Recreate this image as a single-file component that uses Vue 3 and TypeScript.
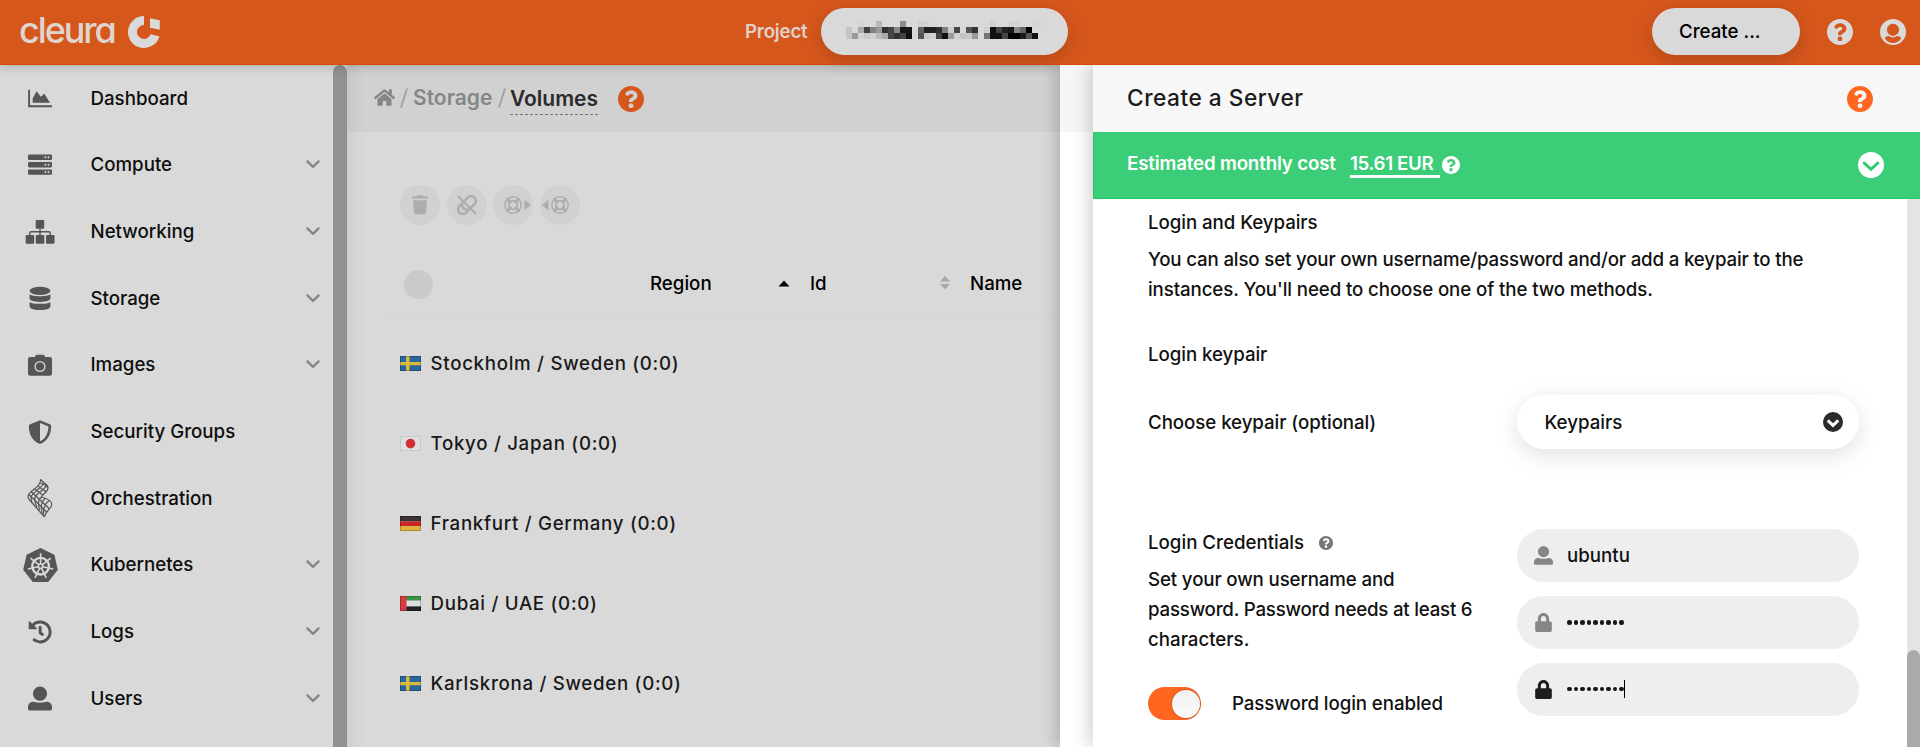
<script setup lang="ts">
interface MenuItem {
  label: string
  icon: string
  expandable: boolean
}

interface Region {
  name: string
  flag: string
}

const menu: MenuItem[] = [
  { label: 'Dashboard', icon: 'chart', expandable: false },
  { label: 'Compute', icon: 'server', expandable: true },
  { label: 'Networking', icon: 'sitemap', expandable: true },
  { label: 'Storage', icon: 'database', expandable: true },
  { label: 'Images', icon: 'camera', expandable: true },
  { label: 'Security Groups', icon: 'shield', expandable: false },
  { label: 'Orchestration', icon: 'mesh', expandable: false },
  { label: 'Kubernetes', icon: 'helm', expandable: true },
  { label: 'Logs', icon: 'history', expandable: true },
  { label: 'Users', icon: 'user', expandable: true },
]

const regions: Region[] = [
  { name: 'Stockholm / Sweden (0:0)', flag: 'se' },
  { name: 'Tokyo / Japan (0:0)', flag: 'jp' },
  { name: 'Frankfurt / Germany (0:0)', flag: 'de' },
  { name: 'Dubai / UAE (0:0)', flag: 'ae' },
  { name: 'Karlskrona / Sweden (0:0)', flag: 'se' },
]

const spokes: number[] = Array.from({ length: 7 }, (_, i) => (i * 360) / 7)

// Grey levels of the redacted project name, one row of 6px cells each.
const d = 217
const redacted: number[][] = [
  [d, d, 212, d, d, 184, d, d, d, 140, d, d, 208, 212, d, d, d, d, d, d, d, d, d, d, 208, d, d, 210, 212, d, d, 210, 214],
  [196, d, 170, 64, 128, 153, 50, 68, 136, 24, 24, d, 96, 32, 32, 48, 128, 205, 68, d, 85, 51, d, 208, 16, 68, 32, 24, 136, 100, 0, d, d],
  [198, 153, 210, 200, 208, 187, 170, 68, 51, 68, 17, d, 85, 200, 208, 68, 17, 153, 208, 196, 200, 153, d, 119, 17, 17, 68, 0, 0, 26, 85, 17, d],
]

const helpPath =
  'M504 256c0 136.997-111.043 248-248 248S8 392.997 8 256C8 119.083 119.043 8 256 8s248 111.083 248 248zM262.655 90c-54.497 0-89.255 22.957-116.549 63.758-3.536 5.286-2.353 12.415 2.715 16.258l34.699 26.31c5.205 3.947 12.621 3.008 16.665-2.122 17.864-22.658 30.113-35.797 57.303-35.797 20.429 0 45.698 13.148 45.698 32.958 0 14.976-12.363 22.667-32.534 33.976C247.128 238.528 216 254.941 216 296v4c0 6.627 5.373 12 12 12h56c6.627 0 12-5.373 12-12v-1.333c0-28.462 83.186-29.647 83.186-106.667 0-58.002-60.165-102-116.531-102zM256 338c-25.365 0-46 20.635-46 46 0 25.364 20.635 46 46 46s46-20.636 46-46c0-25.365-20.635-46-46-46z'
const lockPath =
  'M400 224h-24v-72C376 68.2 307.8 0 224 0S72 68.2 72 152v72H48c-26.5 0-48 21.5-48 48v192c0 26.5 21.5 48 48 48h352c26.5 0 48-21.5 48-48V272c0-26.5-21.5-48-48-48zm-104 0H152v-72c0-39.7 32.3-72 72-72s72 32.3 72 72v72z'
const homePath =
  'M280.37 148.26L96 300.11V464a16 16 0 0 0 16 16l112.06-.29a16 16 0 0 0 15.92-16V368a16 16 0 0 1 16-16h64a16 16 0 0 1 16 16v95.64a16 16 0 0 0 16 16.05L464 480a16 16 0 0 0 16-16V300L295.67 148.26a12.19 12.19 0 0 0-15.3 0zM571.6 251.47L488 182.56V44.05a12 12 0 0 0-12-12h-56a12 12 0 0 0-12 12v72.61L318.47 43a48 48 0 0 0-61 0L4.34 251.47a12 12 0 0 0-1.6 16.9l25.5 31A12 12 0 0 0 45.15 301l235.22-193.74a12.19 12.19 0 0 1 15.3 0L530.9 301a12 12 0 0 0 16.9-1.6l25.5-31a12 12 0 0 0-1.7-16.93z'
const historyPath =
  'M504 255.531c.253 136.64-111.18 248.372-247.82 248.468-59.015.042-113.223-20.53-155.822-54.911-11.077-8.94-11.905-25.541-1.839-35.607l11.267-11.267c8.609-8.609 22.353-9.551 31.891-1.984C173.062 425.135 212.781 440 256 440c101.705 0 184-82.311 184-184 0-101.705-82.311-184-184-184-48.814 0-93.149 18.969-126.068 49.932l50.754 50.754c10.08 10.08 2.941 27.314-11.313 27.314H24c-8.837 0-16-7.163-16-16V38.627c0-14.254 17.234-21.393 27.314-11.314l49.372 49.372C129.209 34.136 189.552 8 256 8c136.81 0 247.747 110.78 248 247.531zm-180.912 78.784l9.823-12.63c8.138-10.463 6.253-25.542-4.21-33.679L288 256.349V152c0-13.255-10.745-24-24-24h-16c-13.255 0-24 10.745-24 24v135.651l65.409 50.874c10.463 8.137 25.541 6.253 33.679-4.21z'
const userPath =
  'M12 0a7.1 7.1 0 1 1 0 14.2A7.1 7.1 0 0 1 12 0zM5.2 15.2c1.7 0 3.4 1 6.8 1s5.100-1 6.800-1c3.100 0 5.200 2.300 5.200 5.300v1.700c0 .9-.7 1.600-1.600 1.600H1.600C.7 23.800 0 23.100 0 22.200v-1.700c0-3 2.100-5.300 5.200-5.300z'
</script>

<template>
  <div class="screen">
    <header class="topbar">
      <div class="brand">
        <span class="wordmark">cleura</span>
        <svg class="mark" viewBox="0 0 32 32">
          <path d="M16 0A16 16 0 1 0 31.400 20.400L22.600 18.200A7 7 0 1 1 16 9z" />
          <path d="M22 2.300l9.800 2v9.400l-9.800-2z" />
        </svg>
      </div>
      <span class="project-label">Project</span>
      <div class="pill project-pill">
        <svg class="mosaic" width="198" height="18" viewBox="0 0 198 18" shape-rendering="crispEdges">
          <template v-for="(row, r) in redacted" :key="r">
            <rect
              v-for="(v, c) in row"
              :key="c"
              :x="c * 6"
              :y="r * 6"
              width="6"
              height="6"
              :fill="`rgb(${v},${v},${v})`"
            />
          </template>
        </svg>
      </div>
      <div class="pill create-pill">Create ...</div>
      <svg class="top-icon help" viewBox="8 8 496 496"><path :d="helpPath" /></svg>
      <svg class="top-icon" viewBox="0 0 26 26">
        <path
          fill-rule="evenodd"
          d="M13 0a13 13 0 1 1 0 26 13 13 0 0 1 0-26zm0 4.700a6.100 6.100 0 1 0 0 12.200 6.100 6.100 0 0 0 0-12.200zM4.700 19.200C6.500 22.200 9.500 24 13 24s6.500-1.800 8.300-4.800c-1-1.500-2.600-2.200-4.300-2.100-1.600 1-2.600 1.400-4 1.400s-2.400-.4-4-1.400c-1.700-.1-3.300.6-4.300 2.100z"
        />
      </svg>
    </header>

    <div class="body">
      <nav class="sidebar">
        <div v-for="item in menu" :key="item.label" class="menu-item">
          <svg class="menu-icon" viewBox="0 0 36 36">
            <g v-if="item.icon === 'chart'">
              <path d="M7.100 9.700v16.500H30" fill="none" stroke="currentColor" stroke-width="1.900" />
              <path d="M10.700 22.700v-4.500l4-7 4 5.500 3.600-3 5.700 9z" />
            </g>
            <g v-else-if="item.icon === 'server'">
              <rect x="6" y="7.600" width="24" height="5.400" rx="1.300" />
              <rect x="6" y="15" width="24" height="5.400" rx="1.300" />
              <rect x="6" y="22.400" width="24" height="5.400" rx="1.300" />
              <g class="cut">
                <template v-for="y in [10.300, 17.700, 25.100]" :key="y">
                  <circle cx="23.400" :cy="y" r="1" />
                  <circle cx="26.500" :cy="y" r="1" />
                </template>
              </g>
            </g>
            <g v-else-if="item.icon === 'sitemap'">
              <rect x="13.700" y="6" width="8.500" height="8.700" rx="1" />
              <rect x="3.700" y="21" width="8.500" height="8.800" rx="1" />
              <rect x="13.800" y="21" width="8.500" height="8.800" rx="1" />
              <rect x="24" y="21" width="8.500" height="8.800" rx="1" />
              <path d="M18 14v8M7.800 22v-3q0-1.300 1.300-1.300h17.800q1.300 0 1.300 1.300v3" fill="none" stroke="currentColor" stroke-width="1.400" />
            </g>
            <g v-else-if="item.icon === 'database'">
              <ellipse cx="18" cy="10.900" rx="10.400" ry="4.200" />
              <path d="M7.600 14.300c2.600 2.600 18.200 2.600 20.800 0v4.300c0 4.400-20.800 4.400-20.800 0z" />
              <path d="M7.600 21.900c2.600 2.600 18.200 2.600 20.800 0v4.300c0 5.200-20.800 5.200-20.800 0z" />
            </g>
            <g v-else-if="item.icon === 'camera'">
              <path d="M8.200 10h4.500l1-1.600q.3-.6 1-.6h6.600q.7 0 1 .6l1 1.600h4.500Q30 10 30 12.200v14.300q0 2.200-2.200 2.200H8.200Q6 28.700 6 26.500V12.200Q6 10 8.200 10z" />
              <circle class="cut-line" cx="18" cy="19.500" r="4.900" />
            </g>
            <g v-else-if="item.icon === 'shield'">
              <path
                fill-rule="evenodd"
                d="M18 6.300l9.800 3.900q1.500.6 1.400 2.200C29 21.600 24.600 27.500 18 30 11.400 27.500 7 21.600 6.800 12.400q0-1.600 1.400-2.200zM18 9v18.200c4.900-2.300 8.100-6.900 8.500-14.800z"
              />
            </g>
            <g v-else-if="item.icon === 'mesh'" fill="none" stroke="currentColor" stroke-width="1.200">
              <path d="M18.600-.7C19 4 16 6 13 8.500S5 13.500 6.200 17.500q.6 2 2.800 4.200L22.500 37M18.600-.7C21 3 26 3.500 26 8c0 4-5 5.500-6.500 9 3.500 1 10.500 3 10.300 7.500C29.600 28.500 23 31.500 22.500 37" />
              <path d="M18.300 3.200c3 .8 6 2.300 7.600 4.800M16 6.200l8.200 5.600M12.700 8.900l8 6M9.300 11.700L27.700 29M7 14.500l18 18" />
              <path d="M21 2.200c1.500 4.800-9 8.300-11.500 13.800-1 2.500-.5 4.500 1 7.500M24 4.500c1 4.500-9 7.500-11 13-.8 3 0 6 2 10M19.500 17c-3.500 2.500-3.700 6-2 13M23.500 18.300c-4.300 3-5 7-3.300 15.700M27.300 20.500c-4.800 3.500-6.300 8-5.600 14" />
            </g>
            <g v-else-if="item.icon === 'helm'">
              <path d="M18.500 1l13.900 6.700 3.400 15L26.200 35H10.800L1.200 22.700l3.400-15z" />
              <g class="cut-line">
                <circle cx="18.600" cy="19.200" r="8.300" stroke-width="2.300" />
                <path
                  v-for="a in spokes"
                  :key="a"
                  d="M18.600 16.800V6.200"
                  stroke-width="1.600"
                  :transform="`rotate(${a} 18.600 19.200)`"
                />
                <circle cx="18.600" cy="19.200" r="2.200" stroke-width="1.600" />
              </g>
            </g>
            <svg v-else-if="item.icon === 'history'" x="6.700" y="6.500" width="22.900" height="22.900" viewBox="8 8 496 496">
              <path :d="historyPath" />
            </svg>
            <path v-else transform="translate(6 6.600)" :d="userPath" />
          </svg>
          <span class="menu-label">{{ item.label }}</span>
          <svg v-if="item.expandable" class="chevron" viewBox="0 0 14 9">
            <path d="M1.400 1.400L7 6.900l5.600-5.500" />
          </svg>
        </div>
      </nav>
      <div class="side-scroll"></div>

      <main class="main">
        <div class="crumbs">
          <svg class="home" viewBox="0 32 576 448"><path :d="homePath" /></svg>
          <svg class="slash" viewBox="0 0 8 20"><path d="M7 .5L1 19.500" /></svg>
          <span class="crumb">Storage</span>
          <svg class="slash second" viewBox="0 0 8 20"><path d="M7 .5L1 19.500" /></svg>
          <span class="crumb current">Volumes</span>
          <svg class="crumb-help" viewBox="8 8 496 496"><path :d="helpPath" /></svg>
        </div>

        <div class="toolbar">
          <span class="tool">
            <svg viewBox="0 0 40 40">
              <path d="M12.200 11.300h4.300l1.200-1.300h4.600l1.200 1.300h4.300v2.300H12.200zM13.300 15.200h13.400l-.6 12q-.1 2-2 2h-8.200q-1.900 0-2-2z" />
            </svg>
          </span>
          <span class="tool">
            <svg viewBox="0 0 40 40">
              <g class="line">
                <path d="M11.500 11.700l17 16.800" stroke-width="2.200" />
                <path d="M18.300 15.200l2.600-2.700a4.700 4.700 0 0 1 6.600 6.700l-2.600 2.500a4.500 4.500 0 0 1-3 1.300M15.400 18.200l-2.900 2.800a4.700 4.700 0 0 0 6.600 6.700l2.400-2.400M15.200 20.800a4.500 4.500 0 0 0 4 3.600" stroke-width="2.500" />
              </g>
            </svg>
          </span>
          <span v-for="side in ['right', 'left']" :key="side" class="tool">
            <svg viewBox="0 0 40 40">
              <g class="line">
                <circle cx="20" cy="20" r="8.200" stroke-width="1.500" />
                <circle cx="20" cy="20" r="4.300" stroke-width="1.700" />
                <path d="M14.300 14.300l3 3M25.700 14.300l-3 3M14.300 25.700l3-3M25.700 25.700l-3-3" stroke-width="2.700" />
              </g>
              <path :d="side === 'right' ? 'M31.500 14.500l6.300 5.500-6.300 5.500z' : 'M8.500 14.500L2.200 20l6.300 5.500z'" />
            </svg>
          </span>
        </div>

        <div class="table-head">
          <span class="check"></span>
          <span class="col region">Region</span>
          <svg class="sort-up" viewBox="0 0 12 7"><path d="M.5 6.500L6 .5l5.500 6z" /></svg>
          <span class="col id">Id</span>
          <svg class="sort" viewBox="0 0 10 14"><path d="M0 5.600L5 0l5 5.600zM0 8l5 5.600L10 8z" /></svg>
          <span class="col">Name</span>
        </div>

        <div v-for="region in regions" :key="region.name" class="region-row">
          <svg class="flag" viewBox="0 0 21 15">
            <g v-if="region.flag === 'se'">
              <path fill="#2a659c" d="M0 0h21v15H0z" />
              <path fill="#d8ba3f" d="M6 0h3.500v15H6zM0 6h21v3.300H0z" />
            </g>
            <g v-else-if="region.flag === 'jp'">
              <path fill="#dfdfdf" d="M0 0h21v15H0z" />
              <circle cx="10.500" cy="7.600" r="4.800" fill="#cf3136" />
            </g>
            <g v-else-if="region.flag === 'de'">
              <path fill="#3a3432" d="M0 0h21v5.300H0z" />
              <path fill="#c9262a" d="M0 5.300h21V10H0z" />
              <path fill="#dfb23c" d="M0 10h21v5H0z" />
            </g>
            <g v-else>
              <path fill="#3c9440" d="M0 0h21v5H0z" />
              <path fill="#dedede" d="M0 4.500h21v6H0z" />
              <path fill="#222" d="M0 10.400h21V15H0z" />
              <path fill="#d33c40" d="M0 0h6.500v15H0z" />
            </g>
            <rect class="flag-edge" :class="region.flag" x=".5" y=".5" width="20" height="14" />
          </svg>
          <span class="region-name">{{ region.name }}</span>
        </div>
      </main>
    </div>

    <div class="gutter"></div>

    <aside class="panel">
      <div class="panel-head">
        <h1>Create a Server</h1>
        <svg viewBox="8 8 496 496"><path :d="helpPath" /></svg>
      </div>
      <div class="cost">
        <span class="cost-label">Estimated monthly cost</span>
        <span class="cost-value">15.61 EUR</span>
        <svg class="cost-help" viewBox="8 8 496 496"><path :d="helpPath" /></svg>
        <svg class="cost-toggle" viewBox="0 0 26 26">
          <circle cx="13" cy="13" r="13" />
          <path d="M6.200 11l6.800 6.300 6.800-6.300" />
        </svg>
      </div>
      <div class="panel-body">
        <div class="form">
          <h2>Login and Keypairs</h2>
          <p class="intro">
            You can also set your own username/password and/or add a keypair to the<br />
            <span class="second-line">instances. You'll need to choose one of the two methods.</span>
          </p>
          <h2 class="keypair-title">Login keypair</h2>
          <div class="keypair-row">
            <span class="choose">Choose keypair (optional)</span>
            <div class="select">
              <span>Keypairs</span>
              <svg viewBox="0 0 20 20">
                <circle cx="10" cy="10" r="10" />
                <path d="M4.700 8.400l5.300 5 5.300-5" />
              </svg>
            </div>
          </div>
          <div class="credentials">
            <div class="cred-text">
              <div class="cred-title">
                <span>Login Credentials</span>
                <svg viewBox="8 8 496 496"><path :d="helpPath" /></svg>
              </div>
              <p>
                <span class="hint-first">Set your own username and</span><br />
                <span class="hint-second">password. Password needs at least 6</span><br />
                characters.
              </p>
              <div class="switch-row">
                <span class="switch"><i></i></span>
                <span class="switch-label">Password login enabled</span>
              </div>
            </div>
            <div class="fields">
              <div class="field">
                <svg class="field-icon" viewBox="0 0 24 24"><path :d="userPath" /></svg>
                <span>ubuntu</span>
              </div>
              <div class="field">
                <svg class="field-icon lock" viewBox="0 0 448 512"><path :d="lockPath" /></svg>
                <span class="dots"><i v-for="n in 9" :key="n"></i></span>
              </div>
              <div class="field focused">
                <svg class="field-icon lock" viewBox="0 0 448 512"><path :d="lockPath" /></svg>
                <span class="dots"><i v-for="n in 9" :key="n"></i></span>
                <span class="caret"></span>
              </div>
            </div>
          </div>
        </div>
        <div class="panel-scroll"><i></i></div>
      </div>
    </aside>
  </div>
</template>

<style>
body {
  margin: 0;
  overflow: hidden;
}
</style>

<style scoped>
.screen {
  position: relative;
  width: 1920px;
  height: 747px;
  overflow: hidden;
  background: #d9d9d9;
  color: #0e0e0e;
  font-family: Inter, 'Liberation Sans', sans-serif;
  font-size: 18.700px;
  font-weight: 500;
}
svg {
  display: block;
  flex: none;
  fill: currentColor;
  overflow: visible;
}
span {
  white-space: nowrap;
}

.topbar {
  position: relative;
  z-index: 2;
  display: flex;
  align-items: center;
  height: 65px;
  box-sizing: border-box;
  padding: 0 14px 1px 20px;
  background: #d6571c;
  color: #dadada;
  border-bottom: 1px solid #d9480f;
  box-shadow: 0 2px 10px rgba(0, 0, 0, 0.2);
}
.brand {
  display: flex;
  align-items: center;
  width: 725px;
}
.wordmark {
  width: 109px;
  margin: -3px 0 0 -1px;
  font-size: 36px;
  font-weight: 500;
  line-height: 40px;
  letter-spacing: -2.100px;
  font-feature-settings: 'cv11';
  color: #dfd5d0;
}
.mark {
  width: 32px;
  height: 32px;
}
.project-label {
  width: 76px;
  font-weight: 600;
  letter-spacing: -0.200px;
  color: #e0d2cb;
}
.pill {
  display: flex;
  align-items: center;
  box-sizing: border-box;
  height: 47px;
  border-radius: 24px;
  background: #d9d9d9;
  color: #000;
  box-shadow: 0 5px 18px rgba(0, 0, 0, 0.17);
}
.project-pill {
  width: 247px;
  padding-left: 25px;
  margin-right: 584px;
}
.mosaic {
  margin-top: -3px;
}
.create-pill {
  width: 148px;
  padding-left: 27px;
  margin-right: 27px;
}
.top-icon {
  width: 26px;
  height: 26px;
}
.top-icon.help {
  margin-right: 27px;
}

.body {
  display: flex;
  height: 682px;
}
.sidebar {
  width: 333px;
  height: 682px;
  overflow: hidden;
}
.menu-item {
  display: flex;
  align-items: center;
  height: 66.667px;
  padding: 0 13px 0 22px;
}
.menu-icon {
  width: 36px;
  height: 36px;
  margin-right: 32.500px;
  color: #555;
}
.cut {
  fill: #d9d9d9;
}
.cut-line {
  fill: none;
  stroke: #d9d9d9;
  stroke-width: 1.300;
}
.menu-label {
  flex: 1;
}
.chevron {
  width: 14px;
  height: 9px;
  fill: none;
  stroke: #858585;
  stroke-width: 2.300;
  stroke-linecap: round;
  stroke-linejoin: round;
}
.side-scroll {
  width: 14px;
  background: #919191;
  border-radius: 7px 7px 0 0;
}

.main {
  flex: 1;
  box-shadow: inset 22px 0 18px -18px rgba(0, 0, 0, 0.07);
}
.crumbs {
  display: flex;
  align-items: center;
  height: 67px;
  padding-left: 27px;
  background: #d1d1d1;
  box-shadow: inset 22px 0 18px -18px rgba(0, 0, 0, 0.07);
  font-size: 21px;
  color: #868686;
}
.home {
  width: 21px;
  height: 17px;
  margin: -2px 5px 0 0;
}
.slash {
  width: 8px;
  height: 20px;
  fill: none;
  stroke: #a3a3a3;
  stroke-width: 2;
  margin: -2px 5px 0 0;
}
.slash.second {
  margin-right: 3px;
}
.crumb {
  box-sizing: border-box;
  width: 85px;
  line-height: 31px;
  margin-top: -2px;
  font-weight: 600;
}
.crumb.current {
  width: 88px;
  color: #2b2b2b;
  letter-spacing: 0;
  margin: 0 20px 0 1px;
  border-bottom: 1px dashed #777;
}
.crumb-help {
  width: 26px;
  height: 26px;
  color: #d6571c;
}
.toolbar {
  display: flex;
  gap: 6.667px;
  padding: 53px 0 0 53px;
}
.tool {
  width: 40px;
  height: 40px;
  border-radius: 50%;
  background: #d1d1d1;
  color: #adadad;
}
.line {
  fill: none;
  stroke: #adadad;
  stroke-linecap: round;
}
.table-head {
  display: flex;
  align-items: center;
  height: 66px;
  margin: 25px 0 0 40px;
  padding-left: 17px;
  border-bottom: 1px solid #d3d3d3;
  color: #000;
}
.check {
  width: 29px;
  height: 29px;
  border-radius: 50%;
  background: #cacaca;
  margin-top: 2px;
}
.col.region {
  width: 128px;
  margin-left: 217px;
}
.sort-up {
  width: 12px;
  height: 7px;
  margin-right: 20px;
}
.col.id {
  width: 130px;
}
.sort {
  width: 10px;
  height: 14px;
  margin-right: 20px;
  color: #a9a9a9;
}
.region-row {
  display: flex;
  align-items: center;
  height: 80px;
  padding-left: 53px;
  position: relative;
  top: 6px;
  color: #191919;
}
.flag {
  width: 21px;
  height: 15px;
  margin-right: 9.500px;
}
.flag-edge {
  fill: none;
  stroke: rgba(0, 0, 0, 0.22);
}
.flag-edge.jp {
  stroke: rgba(0, 0, 0, 0.1);
}
.region-name {
  letter-spacing: 0.700px;
}

.gutter {
  position: absolute;
  z-index: 2;
  left: 1060px;
  top: 65px;
  width: 33px;
  height: 682px;
  background: linear-gradient(#f6f6f6 67px, #fff 67px);
  box-shadow: -6px 0 14px rgba(0, 0, 0, 0.16);
  clip-path: inset(0 0 0 -24px);
}
.panel {
  position: absolute;
  z-index: 3;
  left: 1093px;
  top: 65px;
  width: 827px;
  height: 682px;
  background: #fff;
  box-shadow: -3px 0 18px rgba(0, 0, 0, 0.2);
  clip-path: inset(0 0 0 -33px);
}
.panel-head {
  display: flex;
  align-items: center;
  justify-content: space-between;
  height: 67px;
  padding: 0 47px 0 34px;
  background: #f7f7f7;
}
.panel-head h1 {
  margin: -2px 0 0;
  font-size: 22.700px;
  font-weight: 500;
  letter-spacing: 0.500px;
  color: #1a1a1a;
}
.panel-head svg {
  width: 26px;
  height: 26px;
  color: #ff6720;
}
.cost {
  display: flex;
  align-items: center;
  box-sizing: border-box;
  height: 67px;
  padding: 0 36px 0 33px;
  background: #3bcd78;
  border: 1px solid #1fca68;
  border-width: 0 0 1px 1px;
  color: #fff;
  font-weight: 600;
}
.cost-label {
  width: 223px;
  margin-top: -4px;
  letter-spacing: -0.150px;
}
.cost-value {
  box-sizing: border-box;
  width: 90px;
  line-height: 23px;
  margin: 0 2px 0 0;
  letter-spacing: -0.350px;
  border-bottom: 3px solid #fff;
}
.cost-help {
  width: 18px;
  height: 18px;
  margin-right: auto;
}
.cost-toggle {
  width: 26px;
  height: 26px;
}
.cost-toggle path {
  fill: none;
  stroke: #2bca6e;
  stroke-width: 3;
  stroke-linecap: round;
}

.panel-body {
  display: flex;
  height: 548px;
  color: #111;
}
.form {
  flex: 1;
  padding: 10px 48px 0 55px;
}
h2 {
  margin: 0;
  font-size: 18.700px;
  line-height: 28px;
  font-weight: 500;
  letter-spacing: -0.060px;
}
p {
  margin: 0;
  line-height: 30px;
}
.intro {
  margin-top: 8px;
  letter-spacing: -0.160px;
}
.second-line {
  letter-spacing: -0.110px;
}
.keypair-title {
  margin-top: 36px;
}
.keypair-row {
  display: flex;
  align-items: center;
  justify-content: space-between;
  height: 54px;
  margin-top: 26px;
}
.choose {
  letter-spacing: -0.060px;
}
.select {
  display: flex;
  align-items: center;
  justify-content: space-between;
  box-sizing: border-box;
  width: 342px;
  height: 54px;
  padding: 0 16px 0 27.500px;
  border-radius: 27px;
  background: #fff;
  box-shadow: 0 6px 24px rgba(0, 0, 0, 0.12);
}
.select svg {
  width: 20px;
  height: 20px;
  color: #2b2b2b;
}
.select path {
  fill: none;
  stroke: #fff;
  stroke-width: 3;
}
.credentials {
  display: flex;
  justify-content: space-between;
  margin-top: 80px;
}
.cred-title {
  display: flex;
  align-items: center;
  gap: 15px;
  height: 26px;
}
.cred-title svg {
  width: 14px;
  height: 14px;
  margin-top: 2px;
  color: #777;
}
.cred-text p {
  margin-top: 10px;
}
.hint-first {
  letter-spacing: -0.130px;
}
.hint-second {
  letter-spacing: -0.210px;
}
.switch-row {
  display: flex;
  align-items: center;
  gap: 31px;
  height: 33px;
  margin-top: 32px;
}
.switch-label {
  letter-spacing: -0.080px;
}
.switch {
  display: flex;
  justify-content: flex-end;
  box-sizing: border-box;
  width: 53px;
  height: 33px;
  padding: 2.500px 1px;
  border-radius: 17px;
  background: #ff6720;
}
.switch i {
  width: 28px;
  height: 28px;
  border-radius: 50%;
  background: linear-gradient(#f0f0f0, #fbfbfb);
  box-shadow: 0 0 2px rgba(0, 0, 0, 0.45);
}
.fields {
  display: flex;
  flex-direction: column;
  gap: 13.500px;
}
.field {
  display: flex;
  align-items: center;
  box-sizing: border-box;
  width: 342px;
  height: 53.300px;
  padding-left: 17px;
  border-radius: 27px;
  background: #eee;
}
.field-icon {
  width: 19px;
  height: 19px;
  margin-right: 14px;
  color: #868686;
}
.focused .field-icon {
  color: #1d1d1d;
}
.dots {
  display: flex;
  gap: 2px;
}
.dots i {
  width: 4.500px;
  height: 4.500px;
  border-radius: 50%;
  background: #161616;
}
.caret {
  width: 1px;
  height: 18px;
  background: #000;
}
.panel-scroll {
  display: flex;
  align-items: flex-end;
  width: 13px;
  background: #e4e4e4;
}
.panel-scroll i {
  width: 13px;
  height: 97px;
  border-radius: 7px 7px 0 0;
  background: #aaa;
}
</style>
